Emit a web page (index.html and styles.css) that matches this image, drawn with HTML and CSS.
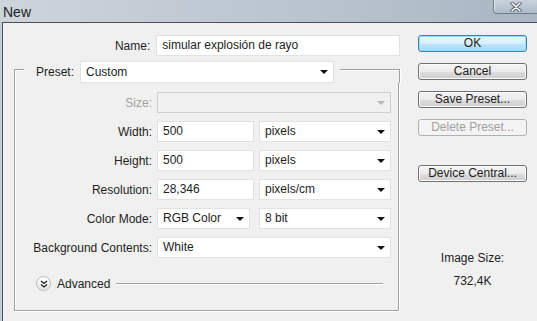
FILE: index.html
```html
<!DOCTYPE html>
<html lang="es">
<head>
    <meta charset="UTF-8">
    <title>New</title>
    <link rel="stylesheet" href="styles.css">
</head>
<body>
    <div class="window">
        <div class="titlebar">
            <span class="title">New</span>
            <div class="close">
                <svg width="12" height="10" viewBox="0 0 12 10">
                    <path d="M2 1 L10 9 M10 1 L2 9" stroke="#4a5562" stroke-width="3.2" stroke-linecap="round"/>
                    <path d="M2 1 L10 9 M10 1 L2 9" stroke="#fff" stroke-width="1.6" stroke-linecap="round"/>
                </svg>
            </div>
        </div>
        <div class="client">
            <div class="form">
                <div class="name-row">
                    <span class="label">Name:</span>
                    <div class="field name-field">simular explosión de rayo</div>
                </div>

                <div class="group-head">
                    <span class="edge edge-left"></span>
                    <span class="preset-label">Preset:</span>
                    <div class="field select preset">Custom<i class="arrow"></i></div>
                    <span class="edge edge-right"></span>
                </div>
                <div class="group-body">
                    <div class="rows">
                        <span class="label disabled">Size:</span>
                        <div class="field select disabled full"><i class="arrow"></i></div>

                        <span class="label">Width:</span>
                        <div class="pair">
                            <div class="field num">500</div>
                            <div class="field select unit">pixels<i class="arrow"></i></div>
                        </div>

                        <span class="label">Height:</span>
                        <div class="pair">
                            <div class="field num">500</div>
                            <div class="field select unit">pixels<i class="arrow"></i></div>
                        </div>

                        <span class="label">Resolution:</span>
                        <div class="pair">
                            <div class="field num">28,346</div>
                            <div class="field select unit">pixels/cm<i class="arrow"></i></div>
                        </div>

                        <span class="label">Color Mode:</span>
                        <div class="pair wide-gap">
                            <div class="field select mode">RGB Color<i class="arrow"></i></div>
                            <div class="field select unit">8 bit<i class="arrow"></i></div>
                        </div>

                        <span class="label">Background Contents:</span>
                        <div class="field select full">White<i class="arrow"></i></div>
                    </div>
                    <div class="advanced">
                        <span class="toggle">
                            <svg width="8" height="8" viewBox="0 0 8 8">
                                <path d="M1 1 L4 3.5 L7 1 M1 4.5 L4 7 L7 4.5" fill="none" stroke="#222" stroke-width="1.3"/>
                            </svg>
                        </span>
                        <span class="adv-text">Advanced</span>
                        <span class="adv-line"></span>
                    </div>
                </div>
            </div>

            <div class="side">
                <div class="btn default">OK</div>
                <div class="btn">Cancel</div>
                <div class="btn">Save Preset...</div>
                <div class="btn off">Delete Preset...</div>
                <div class="btn device">Device Central...</div>
                <div class="size-info">
                    <p>Image Size:</p>
                    <p>732,4K</p>
                </div>
            </div>
        </div>
    </div>
</body>
</html>
```

FILE: styles.css
```css
/* Dialog window */
body {
    margin: 0;
    padding: 0;
    width: 537px;
    height: 321px;
    overflow: hidden;
    font-family: 'Liberation Sans', Arial, sans-serif;
    font-size: 12px;
    color: #1e1e1e;
    background: #c3ccd6;
}
.window {
    width: 537px;
    height: 321px;
    display: flex;
    flex-direction: column;
}
.titlebar {
    height: 22px;
    display: flex;
    justify-content: space-between;
    align-items: flex-start;
    background: linear-gradient(to right, #cdd4dc, #b8c3ce 60%, #a9b6c3);
}
.title {
    padding: 4px 0 0 3px;
    font-family: 'Liberation Sans', Arial, sans-serif;
    font-size: 14px;
    color: #1a1f26;
}
.close {
    width: 43px;
    height: 13px;
    display: flex;
    align-items: center;
    justify-content: center;
    border: 1px solid #6f7c89;
    border-top: none;
    border-right: none;
    border-radius: 0 0 0 4px;
    background: linear-gradient(to bottom, #c9d2db, #aebbc8);
    box-shadow: inset 1px 0 0 #dfe5eb;
}
.client {
    flex: 1;
    margin-left: 2px;
    border-left: 1px solid #4a5058;
    border-top: 1px solid #4a5058;
    background: #f0f0f0;
    display: flex;
}

/* Left form */
.form {
    width: 397px;
    padding-top: 12px;
}
.name-row {
    display: flex;
    align-items: center;
    height: 21px;
}
.name-row .label {
    width: 148px;
    margin-right: 6px;
}
.label {
    text-align: right;
    white-space: nowrap;
}
.label.disabled {
    color: #a3a3a3;
}
.field {
    box-sizing: border-box;
    height: 21px;
    line-height: 19px;
    padding: 0 5px;
    background: #fff;
    border: 1px solid #e2e2e2;
    white-space: nowrap;
    position: relative;
}
.name-field {
    width: 245px;
}
.select .arrow {
    position: absolute;
    right: 5px;
    top: 8px;
    width: 0;
    height: 0;
    border-left: 4px solid transparent;
    border-right: 4px solid transparent;
    border-top: 4px solid #111;
}
.field.disabled {
    background: #f0f0f0;
    border-color: #cfcfcf;
}
.field.disabled .arrow {
    border-top-color: #b5b5b5;
}

/* Group box */
.group-head {
    display: flex;
    align-items: flex-start;
    height: 22px;
    margin-top: 5px;
    margin-left: 11px;
}
.edge {
    box-sizing: border-box;
    height: 14px;
    margin-top: 8px;
    border-top: 1px solid #a0a0a0;
    box-shadow: inset 0 1px 0 #fff;
}
.edge-left {
    width: 10px;
    border-left: 1px solid #a0a0a0;
    box-shadow: inset 1px 1px 0 #fff;
}
.edge-right {
    flex: 1;
    margin-left: 6px;
    border-right: 1px solid #a0a0a0;
    box-shadow: inset 0 1px 0 #fff, 1px 0 0 #fff;
}
.preset-label {
    width: 44px;
    padding-left: 12px;
    line-height: 22px;
}
.preset {
    width: 254px;
    height: 22px;
    line-height: 20px;
}
.group-body {
    box-sizing: border-box;
    margin-left: 11px;
    width: 385px;
    height: 228px;
    border: 1px solid #a0a0a0;
    border-top: none;
    box-shadow: inset 1px 0 0 #fff, 1px 1px 0 #fff;
    padding-top: 9px;
}
.rows {
    display: grid;
    grid-template-columns: 137px 234px;
    column-gap: 5px;
    row-gap: 8px;
    align-items: center;
}
.full {
    width: 234px;
}
.pair {
    display: flex;
    gap: 5px;
}
.pair.wide-gap {
    gap: 9px;
}
.num {
    width: 97px;
}
.mode {
    width: 93px;
}
.unit {
    width: 132px;
}
.advanced {
    display: flex;
    align-items: center;
    margin-top: 18px;
    padding-left: 21px;
    padding-right: 15px;
}
.toggle {
    box-sizing: border-box;
    width: 15px;
    height: 15px;
    border-radius: 50%;
    border: 1px solid #b9b9b9;
    background: linear-gradient(to bottom, #ffffff, #e4e4e4);
    display: flex;
    align-items: center;
    justify-content: center;
}
.adv-text {
    margin-left: 6px;
}
.adv-line {
    flex: 1;
    margin-left: 6px;
    height: 1px;
    background: #a0a0a0;
    box-shadow: 0 1px 0 #fff;
}

/* Buttons */
.side {
    margin-left: 18px;
    width: 109px;
    padding-top: 12px;
}
.btn {
    box-sizing: border-box;
    height: 17px;
    margin-bottom: 11px;
    line-height: 15px;
    text-align: center;
    border: 1px solid #707070;
    border-radius: 3px;
    background: linear-gradient(to bottom, #f3f3f3 0%, #ebebeb 50%, #dddddd 51%, #cfcfcf 100%);
    box-shadow: inset 0 0 0 1px #fcfcfc;
}
.btn.default {
    border-color: #3c7fb1;
    background: linear-gradient(to bottom, #eaf6fd 0%, #d9f0fc 50%, #bee6fd 51%, #a7d9f5 100%);
    box-shadow: inset 0 0 0 1px #98e0f9;
}
.btn.off {
    color: #a0a0a0;
    border-color: #adb2b5;
    background: #f4f4f4;
    box-shadow: none;
}
.btn.device {
    margin-top: 29px;
}
.size-info {
    margin-top: 69px;
    text-align: center;
}
.size-info p {
    margin: 0 0 9px;
    line-height: 14px;
}
.size-info p + p {
    margin-top: 2px;
}
```
